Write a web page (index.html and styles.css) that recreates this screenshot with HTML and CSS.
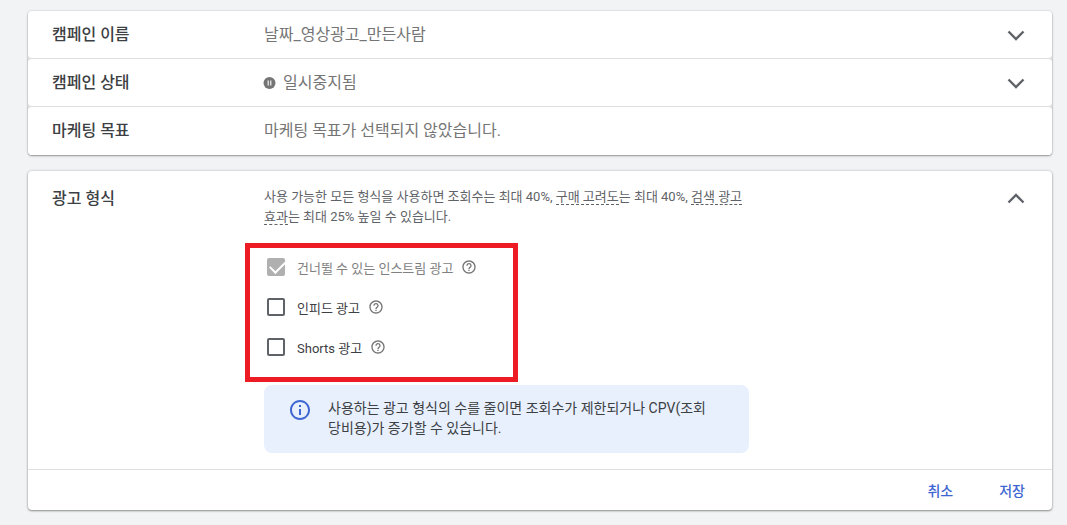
FILE: index.html
```html
<!DOCTYPE html>
<html lang="ko">
<head>
<meta charset="utf-8">
<meta name="viewport" content="width=device-width, initial-scale=1">
<title>캠페인 설정</title>
<link rel="stylesheet" href="styles.css">
</head>
<body>
<svg class="sprite" aria-hidden="true">
  <symbol id="help" viewBox="0 0 24 24"><path d="M11 18h2v-2h-2v2zm1-16C6.480 2 2 6.480 2 12s4.480 10 10 10 10-4.480 10-10S17.520 2 12 2zm0 18c-4.410 0-8-3.590-8-8s3.590-8 8-8 8 3.590 8 8-3.590 8-8 8zm0-14c-2.210 0-4 1.790-4 4h2c0-1.100.9-2 2-2s2 .9 2 2c0 2-3 1.750-3 5h2c0-2.250 3-2.500 3-5 0-2.210-1.790-4-4-4z"/></symbol>
  <symbol id="chevron" viewBox="0 0 24 24"><path d="M4.500 8.500 12 16l7.500-7.500" fill="none" stroke="currentColor" stroke-width="2.400"/></symbol>
</svg>
<main class="page">
  <div class="group">
    <section class="row">
      <h2 class="title">캠페인 이름</h2>
      <p class="value">날짜_영상광고_만든사람</p>
      <button class="toggle" type="button" aria-label="캠페인 이름 펼치기"><svg class="chevron"><use href="#chevron"/></svg></button>
    </section>
    <section class="row">
      <h2 class="title">캠페인 상태</h2>
      <p class="value status"><svg class="pause" viewBox="0 0 12 12" aria-hidden="true"><circle cx="5.500" cy="6" r="6" fill="#757575"/><path d="M4.200 3.500v5M6.800 3.500v5" stroke="#fff" stroke-width="1.100"/></svg>일시중지됨</p>
      <button class="toggle" type="button" aria-label="캠페인 상태 펼치기"><svg class="chevron"><use href="#chevron"/></svg></button>
    </section>
    <section class="row">
      <h2 class="title">마케팅 목표</h2>
      <p class="value">마케팅 목표가 선택되지 않았습니다.</p>
    </section>
  </div>

  <section class="card">
    <div class="card-body">
      <h2 class="title">광고 형식</h2>
      <div class="content">
        <p class="description">사용 가능한 모든 형식을 사용하면 조회수는 최대 40%, <span class="term">구매 고려도</span>는 최대 40%, <span class="term">검색 광고 효과</span>는 최대 25% 높일 수 있습니다.</p>
        <fieldset class="formats" aria-label="광고 형식">
          <div class="option">
            <input class="check" type="checkbox" id="instream" checked disabled>
            <label class="label muted" for="instream">건너뛸 수 있는 인스트림 광고</label>
            <button class="help" type="button" aria-label="인스트림 광고 도움말"><svg class="help-icon"><use href="#help"/></svg></button>
          </div>
          <div class="option">
            <input class="check" type="checkbox" id="infeed">
            <label class="label" for="infeed">인피드 광고</label>
            <button class="help" type="button" aria-label="인피드 광고 도움말"><svg class="help-icon"><use href="#help"/></svg></button>
          </div>
          <div class="option">
            <input class="check" type="checkbox" id="shorts">
            <label class="label" for="shorts">Shorts 광고</label>
            <button class="help" type="button" aria-label="Shorts 광고 도움말"><svg class="help-icon"><use href="#help"/></svg></button>
          </div>
        </fieldset>
        <div class="notice">
          <svg class="info" viewBox="0 0 24 24" aria-hidden="true"><path d="M11 7h2v2h-2zm0 4h2v6h-2zm1-9C6.480 2 2 6.480 2 12s4.480 10 10 10 10-4.480 10-10S17.520 2 12 2zm0 18c-4.410 0-8-3.590-8-8s3.590-8 8-8 8 3.590 8 8-3.590 8-8 8z"/></svg>
          <p class="notice-text">사용하는 광고 형식의 수를 줄이면 조회수가 제한되거나 CPV(조회당비용)가 증가할 수 있습니다.</p>
        </div>
      </div>
      <button class="toggle open" type="button" aria-label="광고 형식 접기"><svg class="chevron"><use href="#chevron"/></svg></button>
    </div>
    <footer class="actions">
      <button class="action" type="button">취소</button>
      <button class="action" type="button">저장</button>
    </footer>
  </section>
</main>
</body>
</html>
```
FILE: styles.css
```css
* { box-sizing: border-box; }

body {
  margin: 0;
  background: #f1f3f4;
  color: #3c4043;
  font-family: Roboto, "Noto Sans CJK KR", sans-serif;
  font-size: 13px;
}

h2, p { margin: 0; }
button {
  padding: 0;
  border: 0;
  background: none;
  font: inherit;
  cursor: pointer;
}

.sprite { display: none; }

.page {
  display: flex;
  flex-direction: column;
  gap: 16px;
  padding: 11px 15px 14px 28px;
}

.group {
  display: flex;
  flex-direction: column;
  gap: 1px;
  padding-bottom: 1px;
  border-radius: 4px;
  background: linear-gradient(#e0e0e0 75%, #fff 75%);
  box-shadow: 0 1px 2px rgba(0, 0, 0, 0.36), 0 0 2px rgba(0, 0, 0, 0.2);
}

.row, .card-body {
  display: grid;
  grid-template-columns: 212px 1fr 24px;
  padding: 0 24px;
}

.row {
  align-items: center;
  min-height: 47px;
  border-radius: 4px;
  background: #fff;
}

.title {
  color: #3c4043;
  font-size: 16px;
  font-weight: 500;
  line-height: 24px;
}

.value {
  color: #757575;
  font-size: 16px;
  line-height: 24px;
}

.status {
  display: flex;
  align-items: center;
  gap: 7px;
}

.pause { width: 12px; height: 12px; overflow: visible; }

.toggle {
  width: 24px;
  height: 24px;
  color: #5f6368;
}

.chevron {
  display: block;
  width: 24px;
  height: 24px;
}

.open .chevron { transform: rotate(180deg); }

.card {
  border-radius: 4px;
  background: #fff;
  box-shadow: 0 1px 2px rgba(0, 0, 0, 0.36), 0 0 3px rgba(0, 0, 0, 0.2);
}

.card-body { padding: 16px 24px; }

.content { max-width: 485px; }

.description {
  color: #5f6368;
  line-height: 20px;
}

.term { border-bottom: 1px dashed #5f6368; }

.formats {
  width: 273px;
  max-width: 100%;
  margin: 16px 0 3px -19px;
  padding: 0 17px 9px;
  border: 5px solid #ed1c24;
}

.option {
  display: flex;
  align-items: center;
  height: 40px;
}

.check {
  appearance: none;
  width: 18px;
  height: 18px;
  margin: 0 12px 2px 0;
  border: 2px solid #5f6368;
  border-radius: 2px;
}

.check:disabled {
  border-color: #b0b0b0;
  background: #b0b0b0;
}

.check:checked::before {
  content: "";
  display: block;
  width: 13px;
  height: 7px;
  margin: 2px 0 0 1px;
  border: solid #fff;
  border-width: 0 0 2px 2px;
  transform: translateY(-1px) rotate(-45deg);
}

.check:checked { display: flow-root; }

.label {
  padding-top: 1px;
  color: #3c4043;
  line-height: 20px;
}

.muted { color: #808080; }

.help {
  width: 16px;
  height: 16px;
  margin: 0 0 3px 8px;
}

.help-icon {
  display: block;
  width: 16px;
  height: 16px;
  fill: #757575;
}

.notice {
  display: flex;
  gap: 16px;
  padding: 13px 32px 15px 24px;
  border-radius: 8px;
  background: #e8f0fe;
}

.info {
  flex: none;
  width: 24px;
  height: 24px;
  fill: #3f67d2;
}

.notice-text {
  color: #3c4043;
  font-size: 14px;
  line-height: 20px;
  word-break: break-all;
}

.actions {
  display: flex;
  justify-content: flex-end;
  gap: 24px;
  padding: 9px 16px 7px;
  border-top: 1px solid #e0e0e0;
}

.action {
  padding: 2px 11px;
  color: #3f67d2;
  font-size: 14px;
  font-weight: 500;
  line-height: 20px;
}
```
